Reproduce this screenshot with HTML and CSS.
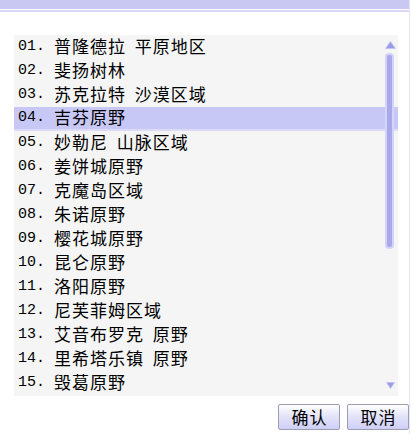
FILE: index.html
```html
<!DOCTYPE html>
<html lang="zh-CN">
<head>
<meta charset="utf-8">
<title>地图选择</title>
<link rel="stylesheet" href="styles.css">
</head>
<body>
<div class="dialog">
  <div class="titlebar"></div>
  <div class="titleline"></div>
  <div class="body">
    <div class="list">
      <div class="row"><span class="num">01.</span><span class="name">普隆德拉 平原地区</span></div>
      <div class="row"><span class="num">02.</span><span class="name">斐扬树林</span></div>
      <div class="row"><span class="num">03.</span><span class="name">苏克拉特 沙漠区域</span></div>
      <div class="row selected"><span class="num">04.</span><span class="name">吉芬原野</span></div>
      <div class="row"><span class="num">05.</span><span class="name">妙勒尼 山脉区域</span></div>
      <div class="row"><span class="num">06.</span><span class="name">姜饼城原野</span></div>
      <div class="row"><span class="num">07.</span><span class="name">克魔岛区域</span></div>
      <div class="row"><span class="num">08.</span><span class="name">朱诺原野</span></div>
      <div class="row"><span class="num">09.</span><span class="name">樱花城原野</span></div>
      <div class="row"><span class="num">10.</span><span class="name">昆仑原野</span></div>
      <div class="row"><span class="num">11.</span><span class="name">洛阳原野</span></div>
      <div class="row"><span class="num">12.</span><span class="name">尼芙菲姆区域</span></div>
      <div class="row"><span class="num">13.</span><span class="name">艾音布罗克 原野</span></div>
      <div class="row"><span class="num">14.</span><span class="name">里希塔乐镇 原野</span></div>
      <div class="row"><span class="num">15.</span><span class="name">毁葛原野</span></div>

      <div class="scrollbar">
        <svg class="arrow up" width="11" height="8" viewBox="0 0 11 8">
          <path d="M5.5 0.5 L10.5 7.5 L0.5 7.5 Z" fill="#9a9ae6" stroke="#c4c4f4" stroke-width="1"/>
        </svg>
        <div class="thumb"></div>
        <svg class="arrow down" width="9" height="7" viewBox="0 0 9 7">
          <path d="M0.5 0.5 L8.5 0.5 L4.5 6.5 Z" fill="#9a9ae6" stroke="#c4c4f4" stroke-width="1"/>
        </svg>
      </div>
    </div>
    <div class="actions">
      <button class="btn">确认</button>
      <button class="btn">取消</button>
    </div>
  </div>
</div>
</body>
</html>
```

FILE: styles.css
```css
html, body {
  margin: 0;
  padding: 0;
  background: #ffffff;
}

.dialog {
  width: 409px;
  height: 434px;
  border-right: 1px solid #e6e6f2;
  position: relative;
}

.titlebar {
  height: 9px;
  background: #c8c8f2;
  border-bottom: 1px solid #ffffff;
}

.titleline {
  height: 2px;
  background: #d8d8f6;
}

.body {
  padding: 23px 0 0 14px;
}

.list {
  position: relative;
  width: 384px;
  height: 361px;
  background: #f5f5f5;
}

.row {
  display: flex;
  align-items: center;
  height: 24px;
  padding: 0 0 2px 4px;
  box-sizing: border-box;
  color: #000000;
}

.row.selected {
  background: #c8c8f6;
  border-bottom: 2px solid #dcdcf6;
}

.num {
  width: 36px;
  font-family: "Liberation Mono", "DejaVu Sans Mono", monospace;
  font-size: 15px;
}

.name {
  font-family: "Noto Sans CJK SC", "Noto Sans", sans-serif;
  font-size: 17px;
  letter-spacing: 1px;
  word-spacing: 4px;
  line-height: 20px;
}

/* overlay scrollbar drawn on top of the rows */
.scrollbar {
  position: absolute;
  top: 0;
  left: 371px;
  width: 11px;
  height: 361px;
}

.arrow {
  position: absolute;
  display: block;
}

.arrow.up {
  top: 6px;
  left: 0;
}

.arrow.down {
  top: 347px;
  left: 1px;
}

.thumb {
  position: absolute;
  top: 18px;
  left: 0;
  width: 5px;
  height: 192px;
  background: #a8a8ea;
  border: 2px solid #d4d4f8;
  border-radius: 4px;
}

.actions {
  display: flex;
  justify-content: flex-end;
  gap: 7px;
  width: 395px;
  margin-top: 8px;
}

.btn {
  width: 62px;
  height: 26px;
  padding: 0 0 1px 1px;
  border: 1px solid #9c9cb4;
  border-radius: 2px;
  background: linear-gradient(#ffffff, #e4e4fa 45%, #cfcff6);
  font-family: "Noto Sans CJK SC", sans-serif;
  font-size: 17px;
  letter-spacing: 1px;
  line-height: 22px;
  color: #000000;
}
```
